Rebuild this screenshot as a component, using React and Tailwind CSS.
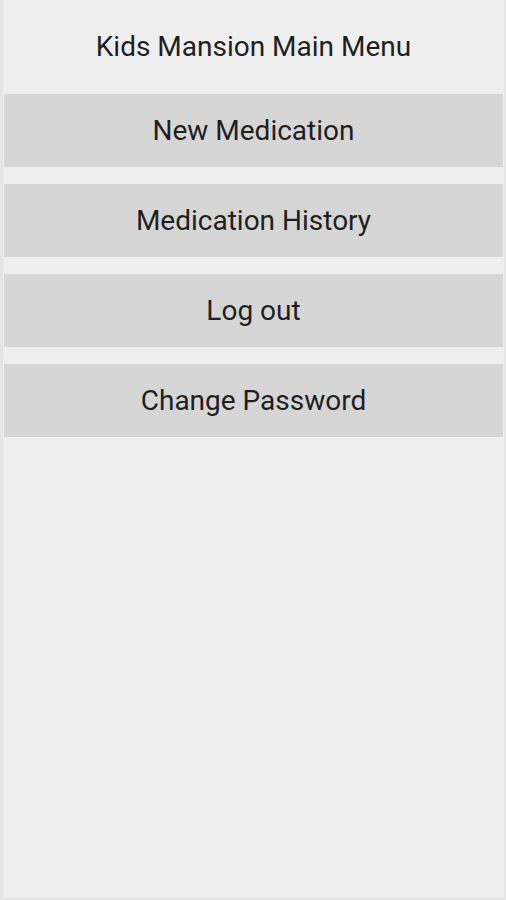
export default function App() {
  const items = ['New Medication', 'Medication History', 'Log out', 'Change Password'];
  return (
    <div className="h-[900px] w-[506px] bg-[#efefef] border-l-[3px] border-r-[2px] border-b-[2px] border-[#e4e4e4] font-['Roboto',sans-serif] text-[#1f1f1f]">
      <div className="h-[94px] flex items-center justify-center text-[28px] pb-[1px]">Kids Mansion Main Menu</div>
      <div className="flex flex-col gap-[17px] pl-[1px] pr-[1px]">
        {items.map((t) => (
          <div key={t} className="h-[73px] bg-[#d6d6d6] flex items-center justify-center text-[28px]">
            {t}
          </div>
        ))}
      </div>
    </div>
  );
}
